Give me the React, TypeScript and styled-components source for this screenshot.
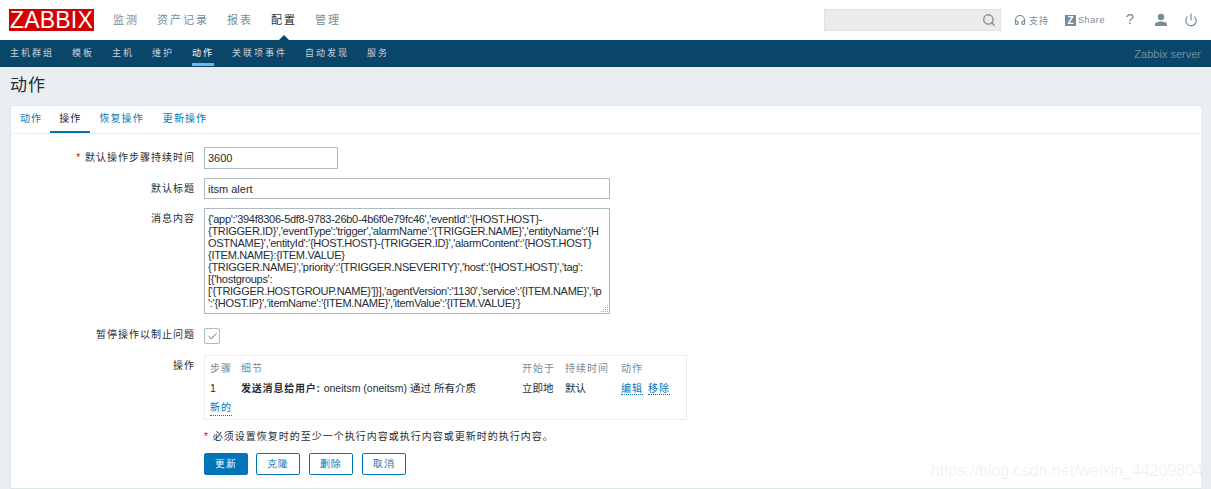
import styled, { createGlobalStyle } from "styled-components";
import { Search, Headphones, Power, Check } from "lucide-react";

const messageText = [
  "{'app':'394f8306-5df8-9783-26b0-4b6f0e79fc46','eventId':'{HOST.HOST}-",
  "{TRIGGER.ID}','eventType':'trigger','alarmName':'{TRIGGER.NAME}','entityName':'{H",
  "OSTNAME}','entityId':'{HOST.HOST}-{TRIGGER.ID}','alarmContent':'{HOST.HOST}",
  "{ITEM.NAME}:{ITEM.VALUE}",
  "{TRIGGER.NAME}','priority':'{TRIGGER.NSEVERITY}','host':'{HOST.HOST}','tag':",
  "[{'hostgroups':",
  "['{TRIGGER.HOSTGROUP.NAME}']}],'agentVersion':'1130','service':'{ITEM.NAME}','ip",
  "':'{HOST.IP}','itemName':'{ITEM.NAME}','itemValue':'{ITEM.VALUE}'}",
].join("\n");

export default function App() {
  return (
    <>
      <GlobalStyle />
      <Page>
        <TopBar>
          <Logo>ZABBIX</Logo>
          <MainNav>
            <MainItem>监测</MainItem>
            <MainItem>资产记录</MainItem>
            <MainItem>报表</MainItem>
            <MainItem $active>配置</MainItem>
            <MainItem>管理</MainItem>
          </MainNav>
          <TopTools>
            <SearchBox>
              <Search size={14} color="#768d99" strokeWidth={2.2} />
            </SearchBox>
            <SupportLink>
              <Headphones size={12} color="#768d99" strokeWidth={2.4} />
              支持
            </SupportLink>
            <ShareLink>
              <ShareBadge>Z</ShareBadge>
              Share
            </ShareLink>
            <HelpMark>?</HelpMark>
            <UserIcon>
              <svg width="14" height="14" viewBox="0 0 14 14" fill="#768d99">
                <circle cx="7" cy="4" r="3.2" />
                <path d="M1 13v-1.5C1 9.5 4 8.6 7 8.6s6 .9 6 2.9V13z" />
              </svg>
            </UserIcon>
            <ToolIcon>
              <Power size={14} color="#768d99" strokeWidth={2} />
            </ToolIcon>
          </TopTools>
        </TopBar>
        <SubBar>
          <SubNav>
            <SubItem>主机群组</SubItem>
            <SubItem>模板</SubItem>
            <SubItem>主机</SubItem>
            <SubItem>维护</SubItem>
            <SubItem $active>动作</SubItem>
            <SubItem>关联项事件</SubItem>
            <SubItem>自动发现</SubItem>
            <SubItem>服务</SubItem>
          </SubNav>
          <ServerName>Zabbix server</ServerName>
        </SubBar>
        <PageTitle>动作</PageTitle>
        <Card>
          <Tabs>
            <Tab>动作</Tab>
            <Tab $active>操作</Tab>
            <Tab>恢复操作</Tab>
            <Tab>更新操作</Tab>
          </Tabs>
          <Form>
            <FormRow $height={22} $gap={9}>
              <Label>
                <Required>*</Required> 默认操作步骤持续时间
              </Label>
              <TextInput $width={134} readOnly value="3600" />
            </FormRow>
            <FormRow $height={21} $gap={9}>
              <Label>默认标题</Label>
              <TextInput $width={406} readOnly value="itsm alert" />
            </FormRow>
            <FormRow $height={106} $gap={14}>
              <Label>消息内容</Label>
              <MessageWrap>
                <MessageArea readOnly value={messageText} spellCheck={false} wrap="off" />
                <Grip width="11" height="11" viewBox="0 0 11 11" fill="#9aa7ae">
                  <rect x="8" y="2" width="1" height="1" />
                  <rect x="6" y="4" width="1" height="1" />
                  <rect x="8" y="4" width="1" height="1" />
                  <rect x="4" y="6" width="1" height="1" />
                  <rect x="6" y="6" width="1" height="1" />
                  <rect x="8" y="6" width="1" height="1" />
                  <rect x="2" y="8" width="1" height="1" />
                  <rect x="4" y="8" width="1" height="1" />
                  <rect x="6" y="8" width="1" height="1" />
                  <rect x="8" y="8" width="1" height="1" />
                </Grip>
              </MessageWrap>
            </FormRow>
            <FormRow $height={15} $gap={12}>
              <CheckLabel>暂停操作以制止问题</CheckLabel>
              <CheckBox>
                <Check size={11} color="#0275b8" strokeWidth={2} />
              </CheckBox>
            </FormRow>
            <FormRow $height={65} $gap={16}>
              <Label>操作</Label>
              <OperationsBox>
                <OperationsTable>
                  <thead>
                    <tr>
                      <HeadCell $width={31}>步骤</HeadCell>
                      <HeadCell $width={281}>细节</HeadCell>
                      <HeadCell $width={43}>开始于</HeadCell>
                      <HeadCell $width={56}>持续时间</HeadCell>
                      <HeadCell>动作</HeadCell>
                    </tr>
                  </thead>
                  <tbody>
                    <tr>
                      <BodyCell>1</BodyCell>
                      <BodyCell>
                        <strong>发送消息给用户:</strong> oneitsm (oneitsm) 通过 所有介质
                      </BodyCell>
                      <BodyCell>立即地</BodyCell>
                      <BodyCell>默认</BodyCell>
                      <BodyCell>
                        <DottedLink>编辑</DottedLink>
                        <DottedLink>移除</DottedLink>
                      </BodyCell>
                    </tr>
                  </tbody>
                </OperationsTable>
                <NewLink>新的</NewLink>
              </OperationsBox>
            </FormRow>
            <Note>
              <Required>*</Required> 必须设置恢复时的至少一个执行内容或执行内容或更新时的执行内容。
            </Note>
            <Buttons>
              <PrimaryButton>更新</PrimaryButton>
              <OutlineButton>克隆</OutlineButton>
              <OutlineButton>删除</OutlineButton>
              <OutlineButton>取消</OutlineButton>
            </Buttons>
          </Form>
        </Card>
        <Watermark>https://blog.csdn.net/weixin_44209804</Watermark>
      </Page>
    </>
  );
}

const GlobalStyle = createGlobalStyle`
  html, body {
    margin: 0;
    padding: 0;
    background: #ebeef0;
    overflow: hidden;
  }

  body {
    font-family: "Liberation Sans", "Noto Sans CJK SC", sans-serif;
    font-size: 12px;
    color: #1f2c33;
  }
`;

const Page = styled.div`
  position: relative;
  width: 1211px;
  height: 489px;
  overflow: hidden;
`;

const TopBar = styled.header`
  height: 40px;
  background: #fff;
  display: flex;
  align-items: center;
  padding: 0 13px 0 9px;
  box-sizing: border-box;
`;

const Logo = styled.div`
  width: 85px;
  height: 22px;
  background: #d40000;
  color: #fff;
  font-size: 23px;
  line-height: 23px;
  text-align: center;
  letter-spacing: 0.2px;
`;

const MainNav = styled.nav`
  display: flex;
  gap: 18px;
  margin-left: 19px;
`;

const MainItem = styled.div<{ $active?: boolean }>`
  position: relative;
  font-size: 11px;
  letter-spacing: 2px;
  line-height: 40px;
  height: 40px;
  margin-top: -1px;
  color: ${(p) => (p.$active ? "#1f2c33" : "#768d99")};

  &::after {
    content: "";
    display: ${(p) => (p.$active ? "block" : "none")};
    position: absolute;
    left: 50%;
    bottom: -1px;
    margin-left: -6px;
    border-left: 6px solid transparent;
    border-right: 6px solid transparent;
    border-bottom: 6px solid #0a466a;
  }
`;

const TopTools = styled.div`
  margin-left: auto;
  display: flex;
  align-items: center;
`;

const SearchBox = styled.div`
  width: 177px;
  height: 22px;
  box-sizing: border-box;
  background: #ebebeb;
  border: 1px solid #e3e3e3;
  display: flex;
  align-items: center;
  justify-content: flex-end;
  padding-right: 4px;
`;

const SupportLink = styled.div`
  display: flex;
  align-items: center;
  gap: 3px;
  margin-left: 13px;
  width: 35px;
  font-size: 9px;
  letter-spacing: 1px;
  color: #768d99;
`;

const ShareLink = styled.div`
  display: flex;
  align-items: center;
  gap: 2px;
  margin-left: 16px;
  font-size: 9px;
  letter-spacing: 0.6px;
  color: #768d99;
`;

const ShareBadge = styled.span`
  width: 11px;
  height: 11px;
  background: #768d99;
  color: #fff;
  font-size: 10px;
  font-weight: bold;
  letter-spacing: 0;
  line-height: 11px;
  text-align: center;
`;

const HelpMark = styled.div`
  margin: 0 0 3px 18px;
  width: 14px;
  font-size: 15px;
  color: #768d99;
  text-align: center;
`;

const ToolIcon = styled.div`
  display: flex;
  margin-left: 16px;
`;

const UserIcon = styled(ToolIcon)`
  margin-left: 17px;
`;

const SubBar = styled.div`
  height: 27px;
  background: #0a466a;
  display: flex;
  align-items: center;
  justify-content: space-between;
  padding: 0 10px;
`;

const SubNav = styled.nav`
  display: flex;
  gap: 18px;
  height: 100%;
`;

const SubItem = styled.div<{ $active?: boolean }>`
  font-size: 9px;
  letter-spacing: 2px;
  line-height: 27px;
  box-sizing: border-box;
  height: 26px;
  color: ${(p) => (p.$active ? "#fff" : "#c5d2da")};
  border-bottom: ${(p) => (p.$active ? "3px solid #69b8e8" : "none")};
`;

const ServerName = styled.div`
  font-size: 11px;
  color: #768d99;
`;

const PageTitle = styled.h1`
  margin: 0;
  height: 38px;
  padding-left: 10px;
  font-size: 17px;
  font-weight: normal;
  letter-spacing: 1px;
  line-height: 38px;
  color: #1f2c33;
`;

const Card = styled.section`
  margin: 0 10px;
  height: 384px;
  box-sizing: border-box;
  background: #fff;
  border: 1px solid #dfe4e7;
  border-right: 0;
`;

const Tabs = styled.div`
  display: flex;
  height: 27px;
  margin-left: -1px;
  border-bottom: 1px solid #ebeef0;
  box-sizing: content-box;
`;

const Tab = styled.div<{ $active?: boolean }>`
  padding: 0 9px;
  height: 25px;
  box-sizing: content-box;
  font-size: 10px;
  letter-spacing: 1.1px;
  line-height: 26px;
  color: ${(p) => (p.$active ? "#1f2c33" : "#0275b8")};
  border-bottom: 2px solid ${(p) => (p.$active ? "#0275b8" : "transparent")};

  &:first-child {
    padding: 0 8px 0 10px;
  }

  &:last-child {
    margin-left: 1px;
  }
`;

const Form = styled.div`
  padding-top: 13px;
`;

const FormRow = styled.div<{ $height: number; $gap: number }>`
  display: flex;
  gap: 9px;
  height: ${(p) => p.$height}px;
  margin-bottom: ${(p) => p.$gap}px;
`;

const Label = styled.div`
  width: 184px;
  flex: none;
  text-align: right;
  font-size: 10px;
  letter-spacing: 1px;
  line-height: 21px;
  color: #1f2c33;
  white-space: nowrap;
`;

const CheckLabel = styled(Label)`
  line-height: 14px;
`;

const Required = styled.span`
  color: #d40000;
`;

const TextInput = styled.input<{ $width: number }>`
  width: ${(p) => p.$width}px;
  height: 100%;
  box-sizing: border-box;
  border: 1px solid #acbbc2;
  padding: 0 3px;
  font: 11px "Liberation Sans", sans-serif;
  color: #1f2c33;
  outline: none;
`;

const MessageWrap = styled.div`
  position: relative;
  width: 406px;
  height: 106px;
`;

const MessageArea = styled.textarea`
  display: block;
  width: 406px;
  height: 106px;
  box-sizing: border-box;
  border: 1px solid #acbbc2;
  padding: 4px 3px 0;
  font: 11px/12px "Liberation Sans", sans-serif;
  letter-spacing: -0.28px;
  color: #1f2c33;
  overflow: hidden;
  outline: none;
  resize: none;
  white-space: pre;
`;

const Grip = styled.svg`
  position: absolute;
  right: 0;
  bottom: 0;
`;

const CheckBox = styled.div`
  width: 14px;
  height: 14px;
  border: 1px solid #acbbc2;
  border-radius: 2px;
  display: flex;
  align-items: center;
  justify-content: center;
`;

const OperationsBox = styled.div`
  width: 483px;
  height: 65px;
  box-sizing: border-box;
  border: 1px solid #ebeef0;
  padding: 0 5px;
`;

const OperationsTable = styled.table`
  border-collapse: collapse;
  table-layout: fixed;
  width: 100%;
`;

const HeadCell = styled.th<{ $width?: number }>`
  width: ${(p) => (p.$width ? `${p.$width}px` : "auto")};
  padding: 0;
  height: 22px;
  font-size: 10px;
  font-weight: normal;
  letter-spacing: 1px;
  text-align: left;
  color: #768d99;
`;

const BodyCell = styled.td`
  padding: 0;
  height: 19px;
  font-size: 10.5px;
  color: #1f2c33;
  white-space: nowrap;

  strong {
    font-size: 10px;
    letter-spacing: 0.8px;
  }
`;

const DottedLink = styled.span`
  font-size: 10px;
  letter-spacing: 1px;
  color: #0275b8;
  border-bottom: 1px dotted #0275b8;
  margin-right: 5px;
`;

const NewLink = styled(DottedLink)`
  display: inline-block;
  margin-top: 4px;
  line-height: 14px;
`;

const Note = styled.div`
  margin: -6px 0 9px 193px;
  height: 14px;
  font-size: 10px;
  letter-spacing: 1px;
  line-height: 14px;
`;

const Buttons = styled.div`
  display: flex;
  gap: 9px;
  margin-left: 193px;
`;

const PrimaryButton = styled.button`
  width: 44px;
  height: 22px;
  padding: 0;
  margin-right: -1px;
  box-sizing: border-box;
  border: 1px solid #0275b8;
  border-radius: 2px;
  background: #0275b8;
  color: #fff;
  font-size: 10px;
  letter-spacing: 1px;
`;

const OutlineButton = styled(PrimaryButton)`
  margin-right: 0;
  background: #fff;
  color: #0275b8;
`;

const Watermark = styled.div`
  position: absolute;
  right: 8px;
  top: 462px;
  font-size: 16px;
  color: rgba(120, 130, 140, 0.12);
`;
